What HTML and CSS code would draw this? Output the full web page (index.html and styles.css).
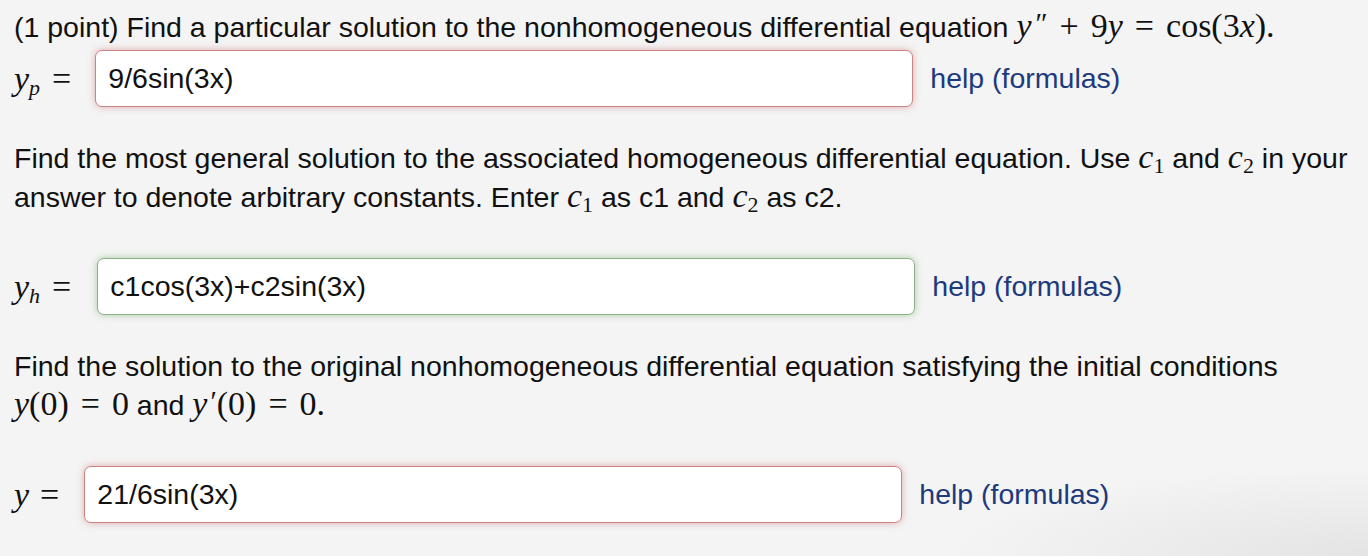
FILE: index.html
```html
<!DOCTYPE html>
<html lang="en">
<head>
<meta charset="utf-8">
<title>Problem</title>
<link rel="stylesheet" href="styles.css">
</head>
<body>
<div class="problem">
  <p class="line first">(1 point) Find a particular solution to the nonhomogeneous differential equation <span class="math"><span class="mi">y</span><span class="prime">″</span><span class="op">+</span>9<span class="mi">y</span><span class="op">=</span>cos(3<span class="mi">x</span>).</span></p>
  <div class="row row1">
    <span class="math label label-p"><span class="mi">y</span><sub class="mi">p</sub><span class="op">=</span></span>
    <input class="ans wrong" type="text" value="9/6sin(3x)">
    <a class="help" href="#">help (formulas)</a>
  </div>
  <p class="line para2">Find the most general solution to the associated homogeneous differential equation. Use <span class="math"><span class="mi">c</span><sub>1</sub></span> and <span class="math"><span class="mi">c</span><sub>2</sub></span> in your<br>answer to denote arbitrary constants. Enter <span class="math"><span class="mi">c</span><sub>1</sub></span> as c1 and <span class="math"><span class="mi">c</span><sub>2</sub></span> as c2.</p>
  <div class="row row2">
    <span class="math label label-h"><span class="mi">y</span><sub class="mi">h</sub><span class="op">=</span></span>
    <input class="ans right" type="text" value="c1cos(3x)+c2sin(3x)">
    <a class="help" href="#">help (formulas)</a>
  </div>
  <p class="line para3">Find the solution to the original nonhomogeneous differential equation satisfying the initial conditions<br><span class="math"><span class="mi">y</span>(0)<span class="op">=</span>0</span> and <span class="math"><span class="mi">y</span><span class="prime1">′</span>(0)<span class="op">=</span>0.</span></p>
  <div class="row row3">
    <span class="math label label-y"><span class="mi">y</span><span class="op op-tight">=</span></span>
    <input class="ans wrong" type="text" value="21/6sin(3x)">
    <a class="help" href="#">help (formulas)</a>
  </div>
</div>
</body>
</html>
```

FILE: styles.css
```css
html, body {
  margin: 0;
  padding: 0;
}
body {
  font-family: "Liberation Sans", Arial, sans-serif;
  font-size: 28.5px;
  color: #111;
  height: 556px;
  overflow: hidden;
  background: radial-gradient(ellipse 420px 90px at 100% 100%, #e4e4e4, #f4f4f4);
}
.problem {
  padding: 8px 0 0 14px;
}
.line {
  margin: 0;
  line-height: 39px;
  white-space: nowrap;
}
.math {
  font-family: "Liberation Serif", "Times New Roman", serif;
  font-size: 34px;
  line-height: 1;
}
.line .math {
  line-height: 0;
}
.mi {
  font-style: italic;
}
.math sub {
  font-size: 22px;
  vertical-align: -5px;
  line-height: 0;
}
.prime {
  font-size: 29px;
  vertical-align: 4px;
  margin-left: 4px;
}
.prime1 {
  font-size: 29px;
  vertical-align: 4px;
  margin-left: 3px;
}
.op {
  margin: 0 12px;
}
.op-tight {
  margin: 0 0 0 11px;
}
.row {
  display: flex;
  align-items: center;
  height: 57px;
}
.row1 { margin-top: 3px; }
.para2 { margin-top: 32px; }
.row2 { margin-top: 41px; }
.para3 { margin-top: 32px; }
.row3 { margin-top: 41px; }
.label-p { margin-right: 12px; }
.label-h { margin-right: 14px; }
.label-y { margin-right: 25px; }
.ans {
  box-sizing: border-box;
  width: 818px;
  height: 57px;
  margin: 0;
  padding: 0 12px;
  border-radius: 7px;
  background: #fff;
  font-family: "Liberation Sans", Arial, sans-serif;
  font-size: 28.5px;
  color: #111;
  outline: none;
}
.wrong {
  border: 1px solid #c98585;
  box-shadow: 0 0 7px rgba(205, 110, 110, 0.55);
}
.right {
  border: 1px solid #8fb18a;
  box-shadow: 0 0 7px rgba(110, 170, 100, 0.55);
}
.help {
  margin-left: 17px;
  color: #1c3a7c;
  text-decoration: none;
}
```
